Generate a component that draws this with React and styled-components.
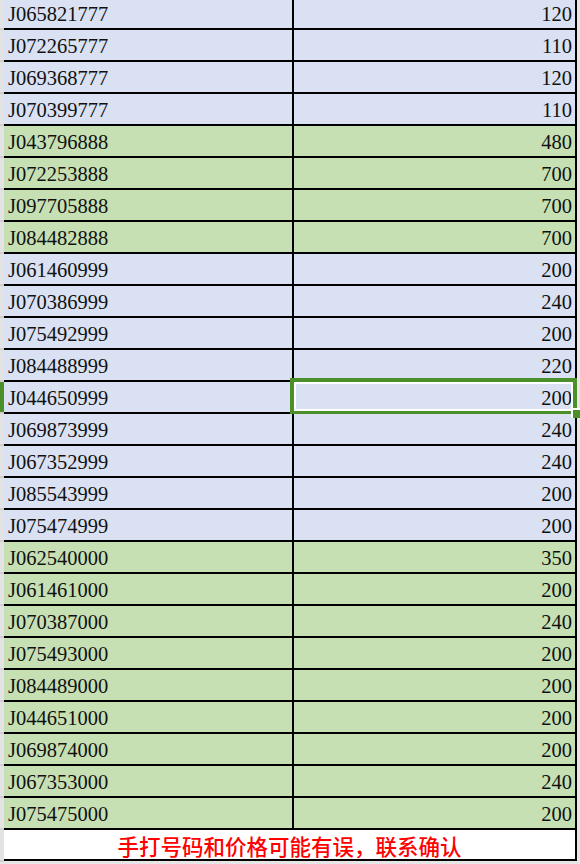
import React from 'react';
import styled, { createGlobalStyle } from 'styled-components';

const rows = [
    ['J065821777', 120, 'blue'],
    ['J072265777', 110, 'blue'],
    ['J069368777', 120, 'blue'],
    ['J070399777', 110, 'blue'],
    ['J043796888', 480, 'green'],
    ['J072253888', 700, 'green'],
    ['J097705888', 700, 'green'],
    ['J084482888', 700, 'green'],
    ['J061460999', 200, 'blue'],
    ['J070386999', 240, 'blue'],
    ['J075492999', 200, 'blue'],
    ['J084488999', 220, 'blue'],
    ['J044650999', 200, 'blue'],
    ['J069873999', 240, 'blue'],
    ['J067352999', 240, 'blue'],
    ['J085543999', 200, 'blue'],
    ['J075474999', 200, 'blue'],
    ['J062540000', 350, 'green'],
    ['J061461000', 200, 'green'],
    ['J070387000', 240, 'green'],
    ['J075493000', 200, 'green'],
    ['J084489000', 200, 'green'],
    ['J044651000', 200, 'green'],
    ['J069874000', 200, 'green'],
    ['J067353000', 240, 'green'],
    ['J075475000', 200, 'green'],
];

const SELECTED = 12;

const fills = {
    blue: '#d9e1f2',
    green: '#c6e0b4',
};

const App = () => {
    return (
        <>
            <GlobalStyle/>
            <Sheet>
                {rows.map(([code, price, tone], i) => (
                    <Row key={code}>
                        <RowHeader active={i === SELECTED}/>
                        <CodeCell fill={fills[tone]}>{code}</CodeCell>
                        <PriceCell fill={fills[tone]} selected={i === SELECTED}>
                            {price}
                            {i === SELECTED && <FillHandle/>}
                        </PriceCell>
                    </Row>
                ))}
                <Row>
                    <RowHeader/>
                    <Note>手打号码和价格可能有误，联系确认</Note>
                </Row>
            </Sheet>
        </>
    );
};

const GlobalStyle = createGlobalStyle`
    body {
        margin: 0;
        background: #e6e6e6;
        font-family: "Liberation Serif", "Times New Roman", serif;
        color: #111;
    }
`;

const Sheet = styled.div`
    width: 577px;
    margin-top: -2px;
`;

const Row = styled.div`
    display: grid;
    grid-template-columns: 4px 290px 283px;
    height: 32px;
`;

const RowHeader = styled.div`
    background: ${({ active }) => (active ? '#4a8f2a' : '#e3e3e3')};
    border-bottom: 2px solid #cfcfcf;
`;

const Cell = styled.div`
    position: relative;
    display: flex;
    align-items: center;
    background: ${({ fill }) => fill};
    border-bottom: 2px solid #000;
    font-size: 20.5px;
    padding-top: 2px;
    box-sizing: border-box;
`;

const CodeCell = styled(Cell)`
    padding-left: 4px;
    border-right: 2px solid #000;
`;

const PriceCell = styled(Cell)`
    justify-content: flex-end;
    padding-right: 3px;
    border-right: 2px solid #000;
    ${({ selected }) => selected && `
        &::after {
            content: '';
            position: absolute;
            left: -4px;
            top: -4px;
            right: -2px;
            bottom: -3px;
            border: 4px solid #4a8f2a;
            box-shadow: inset 0 0 0 2px #fff;
            pointer-events: none;
        }
    `}
`;

const FillHandle = styled.span`
    position: absolute;
    right: -5px;
    bottom: -6px;
    width: 7px;
    height: 8px;
    background: #4a8f2a;
    border-left: 2px solid #fff;
    border-top: 2px solid #fff;
    z-index: 2;
`;

const Note = styled.div`
    grid-column: 2 / 4;
    display: flex;
    align-items: center;
    justify-content: center;
    background: #fff;
    border-bottom: 2px solid #000;
    border-right: 2px solid #000;
    height: 31px;
    box-sizing: border-box;
    padding-top: 1px;
    color: #ff0000;
    font-family: "Noto Sans CJK SC", sans-serif;
    font-size: 21.5px;
    font-weight: 500;
`;

export default App;
